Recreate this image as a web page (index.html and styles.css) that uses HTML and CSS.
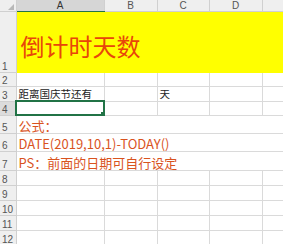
FILE: index.html
```html
<!DOCTYPE html>
<html lang="zh-CN">
<head>
  <meta charset="UTF-8">
  <title>倒计时天数</title>
  <link rel="stylesheet" href="styles.css">
</head>
<body>
  <table class="sheet">
    <colgroup>
      <col class="c-num">
      <col class="c-a">
      <col class="c-b">
      <col class="c-c">
      <col class="c-d">
      <col class="c-e">
    </colgroup>
    <tr class="head">
      <th class="corner"><span class="tri"></span></th>
      <th class="sel">A</th>
      <th>B</th>
      <th>C</th>
      <th>D</th>
      <th></th>
    </tr>
    <tr class="r1">
      <th class="num">1</th>
      <td class="title" colspan="5">倒计时天数</td>
    </tr>
    <tr class="r2">
      <th class="num">2</th>
      <td></td><td></td><td></td><td></td><td></td>
    </tr>
    <tr class="r3">
      <th class="num">3</th>
      <td class="txt">距离国庆节还有</td><td></td><td class="txt">天</td><td></td><td></td>
    </tr>
    <tr class="r4">
      <th class="num cur">4</th>
      <td class="active"><span class="handle"></span></td><td></td><td></td><td></td><td></td>
    </tr>
    <tr class="tall">
      <th class="num">5</th>
      <td class="note" colspan="5">公式：</td>
    </tr>
    <tr class="tall">
      <th class="num">6</th>
      <td class="note" colspan="5">DATE(2019,10,1)-TODAY()</td>
    </tr>
    <tr class="tall last">
      <th class="num">7</th>
      <td class="note" colspan="5">PS：前面的日期可自行设定</td>
    </tr>
    <tr class="row">
      <th class="num">8</th>
      <td></td><td></td><td></td><td></td><td></td>
    </tr>
    <tr class="row">
      <th class="num">9</th>
      <td></td><td></td><td></td><td></td><td></td>
    </tr>
    <tr class="row">
      <th class="num">10</th>
      <td></td><td></td><td></td><td></td><td></td>
    </tr>
    <tr class="row">
      <th class="num">11</th>
      <td></td><td></td><td></td><td></td><td></td>
    </tr>
    <tr class="row">
      <th class="num">12</th>
      <td></td><td></td><td></td><td></td><td></td>
    </tr>
    <tr class="row">
      <th class="num"></th>
      <td></td><td></td><td></td><td></td><td></td>
    </tr>
  </table>
</body>
</html>
```

FILE: styles.css
```css
body {
  margin: 0;
  background: #ffffff;
  overflow: hidden;
  font-family: "Noto Sans CJK SC", "Liberation Sans", sans-serif;
}
.sheet {
  border-collapse: collapse;
  table-layout: fixed;
  width: 300px;
}
.c-num { width: 16px; }
.c-a { width: 88px; }
.c-b { width: 53px; }
.c-c { width: 52px; }
.c-d { width: 53px; }
.c-e { width: 38px; }
td, th {
  border: 1px solid #dadada;
  padding: 0;
  overflow: hidden;
  white-space: nowrap;
}
th {
  background: #efefef;
  border-color: #d0d0d0;
  font-family: "Liberation Sans", sans-serif;
  font-weight: normal;
  font-size: 10px;
  color: #555;
  line-height: 1;
}
.head {
  height: 11px;
}
.head th {
  border-top: none;
  vertical-align: bottom;
}
.head th.sel {
  background: #d6d6d6;
  border-bottom: 1px solid #217346;
  color: #333;
}
.corner {
  position: relative;
  border-left: none;
}
.tri {
  position: absolute;
  right: 2px;
  bottom: 1px;
  width: 0;
  height: 0;
  border-left: 6px solid transparent;
  border-bottom: 6px solid #b8b8b8;
}
.num {
  border-left: none;
  text-align: left;
  padding-left: 2px;
  vertical-align: bottom;
  font-size: 10px;
}
.num.cur {
  background: #dcdcdc;
  border-right: 1px solid #217346;
}
.r1 { height: 61px; }
.r2 { height: 14px; }
.r3 { height: 15px; }
.r4 { height: 14px; }
.tall { height: 18px; }
.tall.last { height: 19px; }
.row { height: 15px; }
.title {
  background: #ffff00;
  border-color: #ffff00;
  border-left-color: #d0d0d0;
  color: #e8460a;
  font-size: 24px;
  line-height: 1;
  padding: 8px 0 0 4px;
}
.txt {
  font-size: 10.5px;
  color: #222;
  line-height: 1;
  vertical-align: bottom;
  padding: 0 0 1px 2px;
}
.note {
  font-size: 13px;
  color: #d9531e;
  line-height: 1;
  vertical-align: bottom;
  padding: 0 0 1px 2px;
}
.active {
  position: relative;
  border: 2px solid #217346;
}
.handle {
  position: absolute;
  right: -4px;
  bottom: -4px;
  width: 5px;
  height: 5px;
  background: #217346;
  border: 1px solid #ffffff;
}
```
